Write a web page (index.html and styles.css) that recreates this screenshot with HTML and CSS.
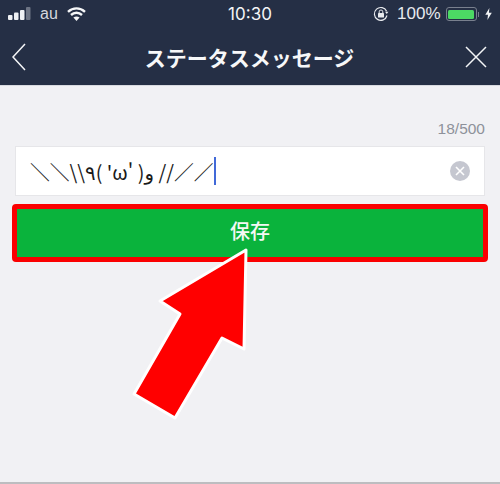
FILE: index.html
```html
<!DOCTYPE html>
<html lang="ja">
<head>
    <meta charset="UTF-8">
    <meta name="viewport" content="width=device-width, initial-scale=1.0">
    <title>ステータスメッセージ</title>
    <link rel="stylesheet" href="styles.css">
</head>
<body>
    <div class="screen">
        <div class="top-bar">
            <div class="status-bar">
                <div class="status-left">
                    <svg class="signal" width="23" height="14" viewBox="0 0 23 14">
                        <rect x="0" y="8" width="4.5" height="5" rx="1" fill="#eef0f3"/>
                        <rect x="6" y="5.5" width="4.5" height="7.5" rx="1" fill="#eef0f3"/>
                        <rect x="12" y="3" width="4.5" height="10" rx="1" fill="#eef0f3"/>
                        <rect x="18" y="0" width="4.5" height="13" rx="1" fill="#6d7484"/>
                    </svg>
                    <span class="carrier">au</span>
                    <svg class="wifi" width="19" height="14" viewBox="0 0 19 14">
                        <path d="M1 4.8 C6 0.2 13 0.2 18 4.8" fill="none" stroke="#f6f7f8" stroke-width="2.4"/>
                        <path d="M4 8 C7.2 5 11.8 5 15 8" fill="none" stroke="#f6f7f8" stroke-width="2.4"/>
                        <path d="M6.4 10.6 C8.4 9 10.6 9 12.6 10.6 L9.5 14 Z" fill="#f6f7f8"/>
                    </svg>
                </div>
                <div class="clock">10:30</div>
                <div class="status-right">
                    <svg class="lock" width="16" height="16" viewBox="0 0 16 16">
                        <path d="M13.6 5.2 A6.4 6.4 0 1 0 14 9.5" fill="none" stroke="#e8eaee" stroke-width="1.2"/>
                        <path d="M12 5.8 L15.4 5.8 L13.8 8 Z" fill="#e8eaee"/>
                        <rect x="5" y="7" width="6" height="4.6" rx="0.6" fill="#e8eaee"/>
                        <path d="M6.2 7 V5.8 A1.8 1.8 0 0 1 9.8 5.8 V7" fill="none" stroke="#e8eaee" stroke-width="1"/>
                    </svg>
                    <span class="battery-text">100%</span>
                    <span class="battery"><span class="battery-fill"></span></span>
                    <span class="battery-tip"></span>
                    <svg class="bolt" width="7" height="12" viewBox="0 0 7 12">
                        <path d="M4.4 0 L0.3 6.8 H3 L2.4 12 L6.8 4.8 H3.9 Z" fill="#f2f3f5"/>
                    </svg>
                </div>
            </div>
            <div class="nav-bar">
                <svg class="nav-back" width="14" height="28" viewBox="0 0 14 28">
                    <path d="M13 1 L1 14 L13 27" fill="none" stroke="#f4f5f7" stroke-width="1.5"/>
                </svg>
                <h1 class="nav-title">ステータスメッセージ</h1>
                <svg class="nav-close" width="22" height="22" viewBox="0 0 22 22">
                    <path d="M1 1 L21 21 M21 1 L1 21" fill="none" stroke="#f4f5f7" stroke-width="1.5"/>
                </svg>
            </div>
        </div>
        <div class="content">
            <div class="counter">18/500</div>
            <div class="input-row">
                <div class="input-text">＼＼\\٩( 'ω' )و //／／<span class="caret"></span></div>
                <span class="clear-btn">
                    <svg width="10" height="10" viewBox="0 0 10 10">
                        <path d="M1 1 L9 9 M9 1 L1 9" fill="none" stroke="#fff" stroke-width="1.6"/>
                    </svg>
                </span>
            </div>
            <div class="save-outline">
                <div class="save-btn">保存</div>
            </div>
        </div>
        <svg class="arrow" width="500" height="484" viewBox="0 0 500 484">
            <polygon points="246,250 160,301 180,314 134,394 175,418 222,338 244,349" fill="#ff0000" stroke="#fff" stroke-width="3" stroke-linejoin="round"/>
        </svg>
    </div>
</body>
</html>
```

FILE: styles.css
```css
html, body {
    margin: 0;
    padding: 0;
}
body {
    font-family: "Liberation Sans", "Noto Sans CJK JP", sans-serif;
    background-color: #f1f1f4;
}
.screen {
    position: relative;
    width: 500px;
    height: 484px;
    overflow: hidden;
    background-color: #f1f1f4;
    border-bottom: 2px solid #bdbdc0;
    box-sizing: border-box;
}
.top-bar {
    background-color: #252f45;
    height: 85px;
    border-bottom: 1px solid #d8dae0;
}
.status-bar {
    display: grid;
    grid-template-columns: 1fr auto 1fr;
    align-items: center;
    height: 28px;
    padding: 0 8px;
    color: #e8eaee;
}
.status-left {
    display: flex;
    align-items: center;
    gap: 9px;
}
.carrier {
    font-size: 16px;
    color: #d5d8de;
}
.clock {
    font-family: "Inter", "Liberation Sans", sans-serif;
    font-size: 17px;
    font-weight: 400;
    color: #f4f5f7;
}
.status-right {
    display: flex;
    align-items: center;
    justify-content: flex-end;
}
.lock {
    margin-right: 8px;
}
.battery-text {
    font-size: 17px;
    color: #e8eaee;
    margin-right: 5px;
}
.battery {
    display: block;
    width: 26px;
    height: 9px;
    padding: 1.5px;
    border: 1px solid #79808e;
    border-radius: 3px;
}
.battery-fill {
    display: block;
    height: 100%;
    background-color: #4cd964;
    border-radius: 1.5px;
}
.battery-tip {
    width: 1.5px;
    height: 5px;
    margin-left: 1px;
    background-color: #79808e;
}
.bolt {
    margin-left: 6px;
}
.nav-bar {
    display: grid;
    grid-template-columns: 1fr auto 1fr;
    align-items: center;
    height: 55px;
    padding: 0 13px 0 12px;
    margin-top: 1px;
}
.nav-close {
    justify-self: end;
}
.nav-title {
    margin: 0;
    font-family: "Noto Sans CJK JP", sans-serif;
    font-size: 21px;
    font-weight: 700;
    color: #f7f8f9;
}
.content {
    padding: 34px 15px 0;
}
.counter {
    text-align: right;
    font-size: 15.5px;
    line-height: 18px;
    color: #8e919a;
}
.input-row {
    display: flex;
    align-items: center;
    justify-content: space-between;
    height: 50px;
    margin-top: 8px;
    padding: 0 14px;
    background-color: #fff;
    border: 1px solid #e6e6e9;
    box-sizing: border-box;
}
.input-text {
    display: flex;
    align-items: center;
    font-family: "Noto Sans CJK JP", "DejaVu Sans", sans-serif;
    font-size: 19.8px;
    color: #1a1a1a;
    white-space: pre;
}
.caret {
    display: inline-block;
    width: 2.5px;
    height: 28px;
    background-color: #4169d8;
}
.clear-btn {
    display: flex;
    align-items: center;
    justify-content: center;
    width: 20px;
    height: 20px;
    border-radius: 50%;
    background-color: #c5c7d0;
}
.save-outline {
    margin: 8px -3px 0;
    border: 5px solid #fa0000;
    border-radius: 4px;
}
.save-btn {
    height: 48px;
    line-height: 44px;
    text-align: center;
    background-color: #0ab33c;
    color: #f4f8f4;
    font-family: "Noto Sans CJK JP", sans-serif;
    font-size: 20px;
    font-weight: 500;
}
.arrow {
    position: absolute;
    top: 0;
    left: 0;
}
```
